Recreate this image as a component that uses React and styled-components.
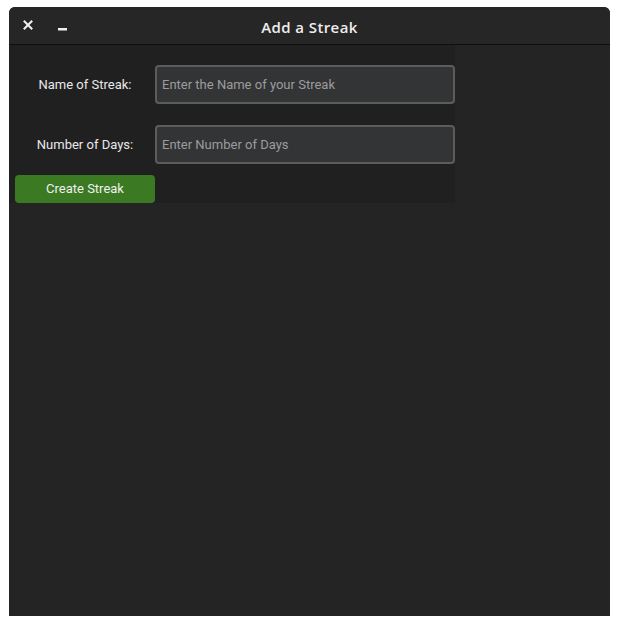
import React from 'react'
import styled, { createGlobalStyle } from 'styled-components'

const GlobalStyle = createGlobalStyle`
  html, body {
    margin: 0;
    padding: 0;
    background: #ffffff;
  }
`

function App() {
  return (
    <>
      <GlobalStyle />
      <Window>
        <TitleBar>
          <Controls>
            <CloseButton>
              <svg width="10" height="10" viewBox="0 0 10 10">
                <path d="M1.5 1.5 L8.5 8.5 M8.5 1.5 L1.5 8.5" stroke="#f0f0f0" strokeWidth="2" strokeLinecap="square" />
              </svg>
            </CloseButton>
            <MinimizeButton>
              <svg width="9" height="3" viewBox="0 0 9 3">
                <rect x="0" y="0" width="9" height="2.5" fill="#f0f0f0" />
              </svg>
            </MinimizeButton>
          </Controls>
          <Title>Add a Streak</Title>
        </TitleBar>

        <Body>
          <FormPanel>
            <Row>
              <Label>Name of Streak:</Label>
              <Field placeholder="Enter the Name of your Streak" />
            </Row>
            <Row>
              <Label>Number of Days:</Label>
              <Field placeholder="Enter Number of Days" />
            </Row>
            <CreateButton>Create Streak</CreateButton>
          </FormPanel>
        </Body>
      </Window>
    </>
  )
}

export default App

const Window = styled.div`
    margin: 7px 10px 0 9px;
    width: 601px;
    height: 609px;
    background: #242424;
    border-radius: 6px 6px 0 0;
    display: flex;
    flex-direction: column;
    overflow: hidden;
`

const TitleBar = styled.div`
    position: relative;
    height: 37px;
    background: #262626;
    border-bottom: 1px solid #0f0f0f;
    display: flex;
    align-items: center;
    justify-content: center;
`

const Controls = styled.div`
    position: absolute;          /* sits over the bar, left of the centred title */
    left: 14px;
    top: 0;
    height: 37px;
    display: flex;
    align-items: center;
    gap: 25px;
`

const CloseButton = styled.div`
    width: 10px;
    height: 10px;
    display: flex;
    margin-top: -1px;
`

const MinimizeButton = styled.div`
    width: 9px;
    height: 3px;
    display: flex;
    margin-top: 7px;
`

const Title = styled.div`
    font-family: "Open Sans", sans-serif;
    font-weight: 600;
    font-size: 15px;
    letter-spacing: 0.4px;
    color: #eeeeec;
    margin-top: 3px;
`

const Body = styled.div`
    flex: 1;
    background: #242424;
`

const FormPanel = styled.div`
    width: 446px;
    background: #202020;
    padding: 20px 0 0 6px;
    box-sizing: border-box;
    display: flex;
    flex-direction: column;
    gap: 21px;
`

const Row = styled.div`
    display: flex;
    align-items: center;
`

const Label = styled.div`
    width: 140px;
    text-align: center;
    font-family: Roboto, "Liberation Sans", sans-serif;
    font-size: 13px;
    color: #e8e8e8;
`

const Field = styled.input`
    width: 300px;
    height: 39px;
    box-sizing: border-box;
    background: #333436;
    border: 2px solid #5b5c5c;
    border-radius: 4px;
    padding: 0 5px;
    font-family: Roboto, "Liberation Sans", sans-serif;
    font-size: 13px;
    color: #e8e8e8;
    outline: none;
    &::placeholder {
        color: #9c9c9c;
    }
`

const CreateButton = styled.div`
    width: 140px;
    height: 28px;
    margin-top: -10px;
    background: #3b7a22;
    border-radius: 4px;
    display: flex;
    align-items: center;
    justify-content: center;
    font-family: Roboto, "Liberation Sans", sans-serif;
    font-size: 13px;
    color: #f0f0f0;
    padding-bottom: 2px;
    box-sizing: border-box;
`
